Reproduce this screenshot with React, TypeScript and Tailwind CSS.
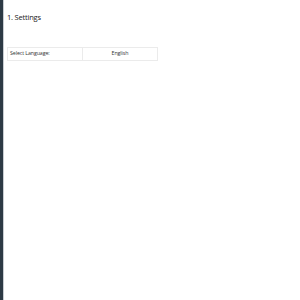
export default function App() {
  return (
    <div className="flex h-[300px] w-[300px] bg-white font-['Open_Sans',sans-serif]">
      <div className="w-[4px] shrink-0 border-r border-[#c8cdd2] bg-[#2d3a45]" />
      <div className="flex-1 pl-[3px] pt-[12px]">
        <h1 className="text-[7.5px] leading-[11px] tracking-[-0.2px] text-[#222]">1. Settings</h1>
        <table className="mt-[24px] w-[151px] border-collapse text-[5.3px] tracking-[-0.1px] text-[#333]">
          <tbody>
            <tr className="h-[13px]">
              <td className="w-[75px] border border-[#ebebeb] px-[2px]">Select Language:</td>
              <td className="border border-[#ebebeb] text-center">English</td>
            </tr>
          </tbody>
        </table>
      </div>
    </div>
  )
}
